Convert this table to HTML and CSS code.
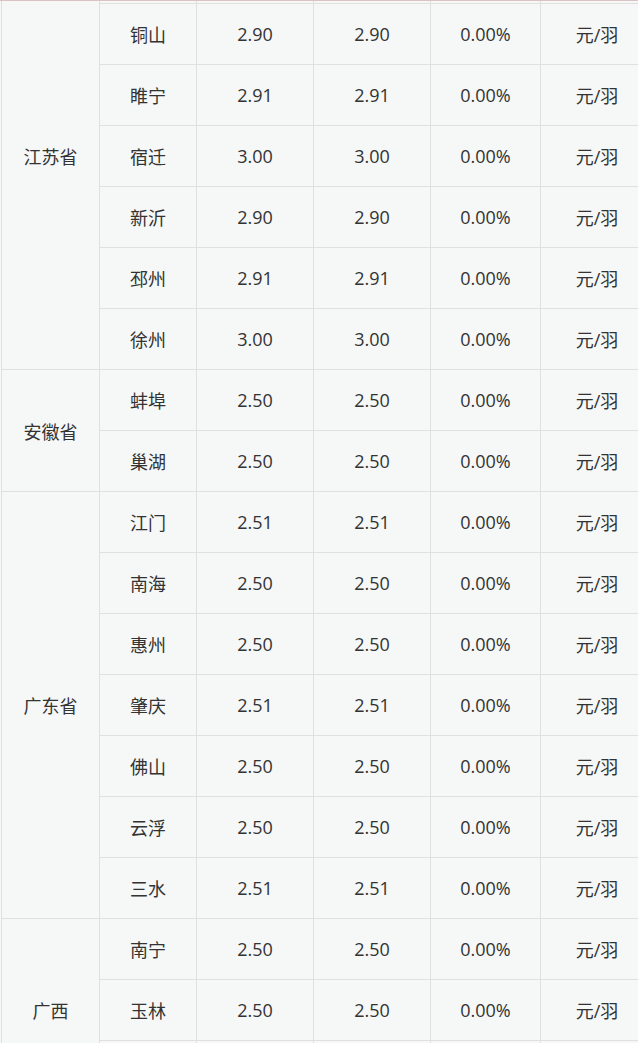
FILE: index.html
```html
<!DOCTYPE html>
<html lang="zh-CN">
<head>
<meta charset="utf-8">
<title>鸭苗价格</title>
<link rel="stylesheet" href="styles.css">
</head>
<body>
<div class="viewport">
<table class="price-table">
  <colgroup>
    <col class="c-prov"><col class="c-city"><col class="c-num"><col class="c-num"><col class="c-pct"><col class="c-unit">
  </colgroup>
  <tbody>
    <tr><td rowspan="7">江苏省</td><td>沭阳</td><td>2.90</td><td>2.90</td><td>0.00%</td><td>元/羽</td></tr>
    <tr><td>铜山</td><td>2.90</td><td>2.90</td><td>0.00%</td><td>元/羽</td></tr>
    <tr><td>睢宁</td><td>2.91</td><td>2.91</td><td>0.00%</td><td>元/羽</td></tr>
    <tr><td>宿迁</td><td>3.00</td><td>3.00</td><td>0.00%</td><td>元/羽</td></tr>
    <tr><td>新沂</td><td>2.90</td><td>2.90</td><td>0.00%</td><td>元/羽</td></tr>
    <tr><td>邳州</td><td>2.91</td><td>2.91</td><td>0.00%</td><td>元/羽</td></tr>
    <tr><td>徐州</td><td>3.00</td><td>3.00</td><td>0.00%</td><td>元/羽</td></tr>
    <tr><td rowspan="2">安徽省</td><td>蚌埠</td><td>2.50</td><td>2.50</td><td>0.00%</td><td>元/羽</td></tr>
    <tr><td>巢湖</td><td>2.50</td><td>2.50</td><td>0.00%</td><td>元/羽</td></tr>
    <tr><td rowspan="7">广东省</td><td>江门</td><td>2.51</td><td>2.51</td><td>0.00%</td><td>元/羽</td></tr>
    <tr><td>南海</td><td>2.50</td><td>2.50</td><td>0.00%</td><td>元/羽</td></tr>
    <tr><td>惠州</td><td>2.50</td><td>2.50</td><td>0.00%</td><td>元/羽</td></tr>
    <tr><td>肇庆</td><td>2.51</td><td>2.51</td><td>0.00%</td><td>元/羽</td></tr>
    <tr><td>佛山</td><td>2.50</td><td>2.50</td><td>0.00%</td><td>元/羽</td></tr>
    <tr><td>云浮</td><td>2.50</td><td>2.50</td><td>0.00%</td><td>元/羽</td></tr>
    <tr><td>三水</td><td>2.51</td><td>2.51</td><td>0.00%</td><td>元/羽</td></tr>
    <tr><td rowspan="3">广西</td><td>南宁</td><td>2.50</td><td>2.50</td><td>0.00%</td><td>元/羽</td></tr>
    <tr><td>玉林</td><td>2.50</td><td>2.50</td><td>0.00%</td><td>元/羽</td></tr>
    <tr><td>桂林</td><td>2.50</td><td>2.50</td><td>0.00%</td><td>元/羽</td></tr>
  </tbody>
</table>
</div>
</body>
</html>
```
FILE: styles.css
```css
html, body {
  margin: 0;
  padding: 0;
  background: #f5f8f7;
  overflow: hidden;
}
.viewport {
  border-top: 1px solid #d8c4c4;
  height: 1042px;
  overflow: hidden;
  padding-left: 1px;
}
.price-table {
  margin-top: -59px;
  border-collapse: collapse;
  table-layout: fixed;
  width: 652px;
  font-family: "Open Sans", "Noto Sans CJK SC", sans-serif;
  font-size: 18px;
  color: #333;
  background: #f5f8f7;
}
.c-prov { width: 98px; }
.c-city { width: 97px; }
.c-num { width: 117px; }
.c-pct { width: 110px; }
.c-unit { width: 113px; }
.price-table td {
  border: 1px solid #e0e0e0;
  height: 60px;
  padding: 0;
  text-align: center;
  vertical-align: middle;
  white-space: nowrap;
}
```
